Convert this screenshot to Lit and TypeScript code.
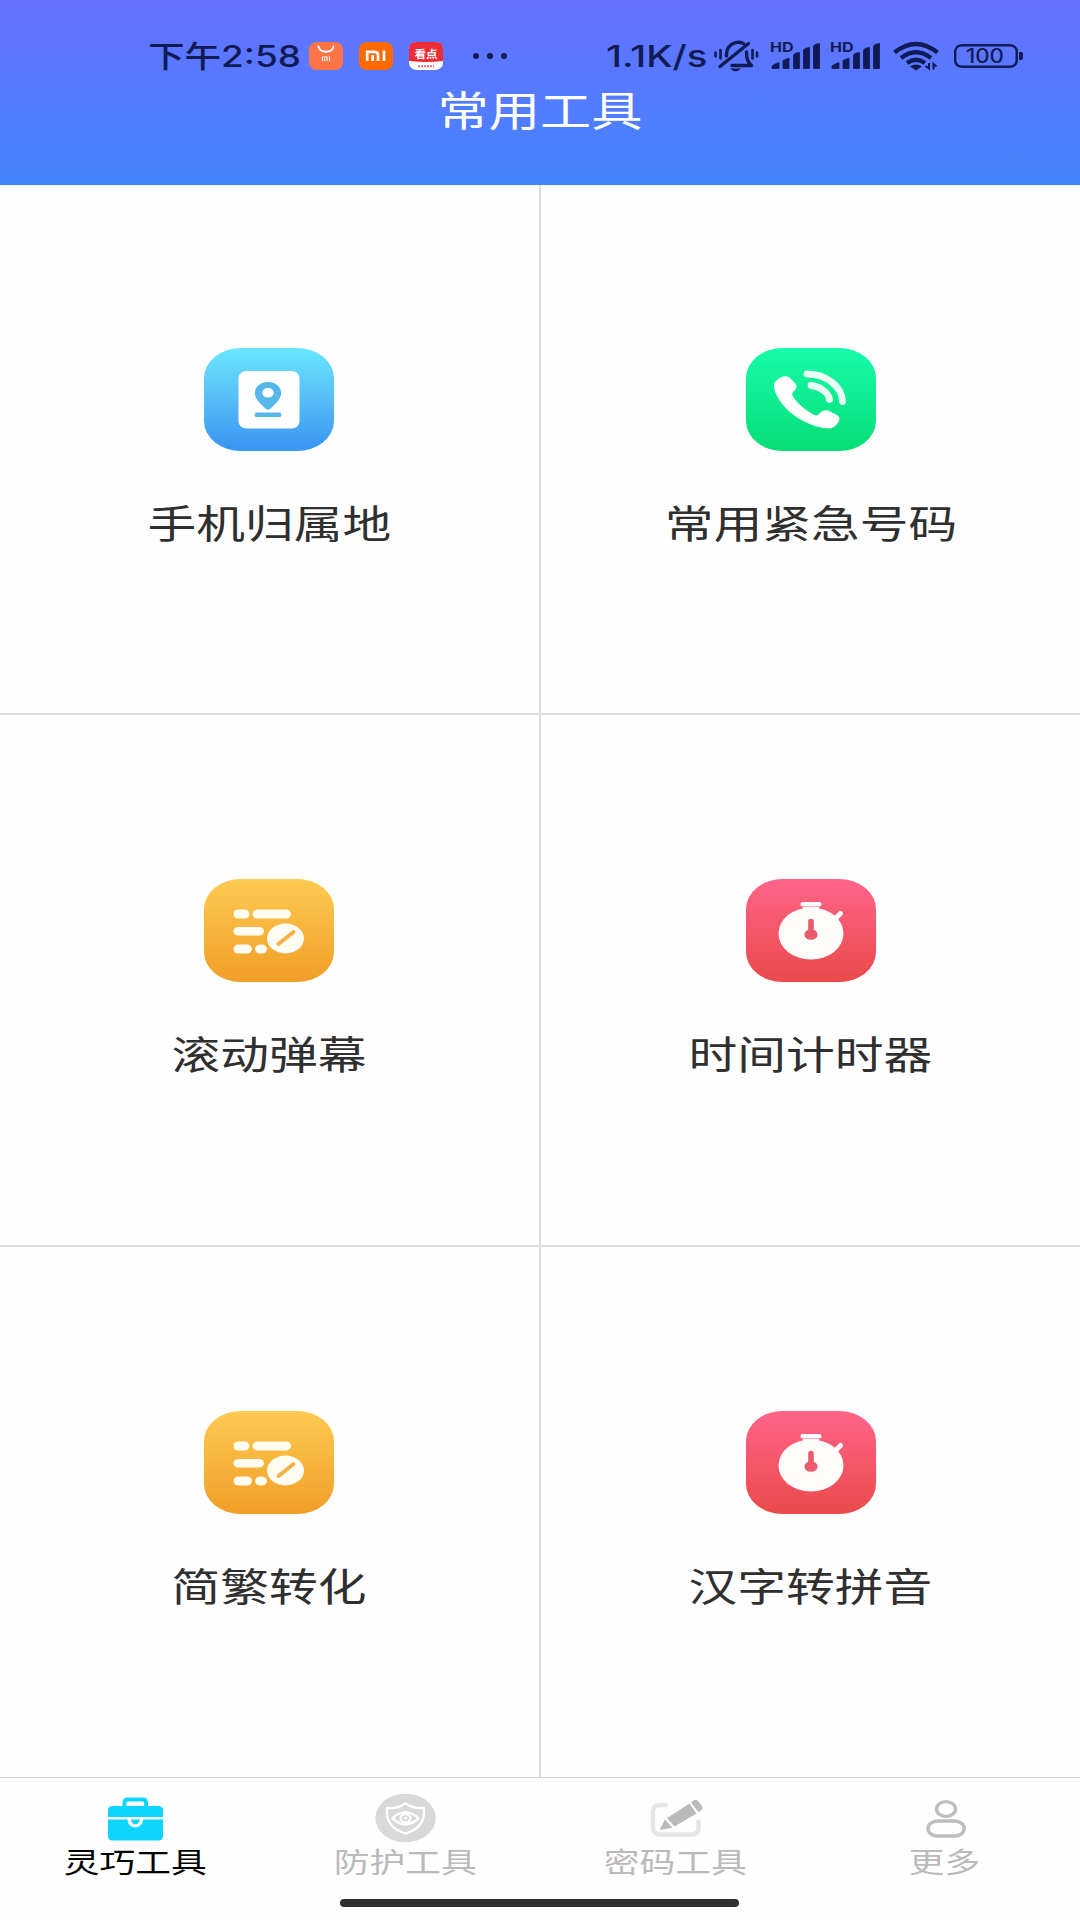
import { LitElement, html, css, svg } from "lit";
import { customElement } from "lit/decorators.js";

const tileIcons: Record<string, unknown> = {
  location: svg`
    <rect x="34.500" y="23" width="61" height="57.500" rx="8" ry="7" fill="#fff"/>
    <path fill-rule="evenodd" fill="#56b8ea" d="M64 34c-7.400 0-13.200 4.800-13.200 11.200C50.800 51.500 58 57.200 62 61q2 1.600 4 0c4-3.800 11.200-9.500 11.200-15.800C77.200 38.800 71.400 34 64 34zm0 6a5.800 4.800 0 1 1 0 9.600a5.800 4.800 0 1 1 0-9.600z"/>
    <rect x="50.800" y="64.600" width="26.400" height="4.400" rx="1.500" fill="#56b8ea"/>`,
  phone: svg`
    <path fill="#fff" d="M28 36Q28.500 33 34.500 29.600Q39.500 27 43.500 29.500L49.500 35.500Q52 39.500 48.500 42.500Q44.800 45.500 47 48.500C52 56.500 61 63 68.500 67Q71.500 68.300 73.500 65.500Q77.500 61 82 62.500L91 67Q94.500 69 93 73Q90 79 84.500 80.500C66 80.500 46 68 37.500 57.500C31.500 50 27.500 43 28 36Z"/>
    <path fill="none" stroke="#e9fff5" stroke-width="6.800" stroke-linecap="round" d="M61 26C80 26 96 38 96.500 53.500M65 37.500C74 38 83 45.500 83.500 51.500"/>`,
  list: svg`
    <g fill="#fffdf2"><rect x="29.500" y="30.500" width="16" height="9" rx="5" ry="4.500"/><rect x="48.500" y="30.500" width="38.500" height="9" rx="5" ry="4.500"/>
    <rect x="29.500" y="48" width="30.500" height="8.500" rx="5" ry="4.250"/>
    <rect x="29.500" y="65.500" width="18.500" height="9" rx="5" ry="4.500"/><rect x="51" y="65.500" width="12" height="9" rx="5.500" ry="4.500"/>
    <ellipse cx="81.500" cy="59.500" rx="18.500" ry="15"/></g>
    <path d="M74.500 65L89.500 53" stroke="#f5b046" stroke-width="3.800" stroke-linecap="round"/>`,
  timer: svg`
    <g fill="#fffdfb"><rect x="54.500" y="23" width="21" height="4.600" rx="2"/><path d="M57 28h16v4H57z"/>
    <ellipse cx="65" cy="54.500" rx="32.500" ry="26"/></g>
    <path d="M88 41L94.500 34.500" stroke="#fffdfb" stroke-width="5" stroke-linecap="round"/>
    <path d="M65 42.500V54" stroke="#e95b6d" stroke-width="5.600" stroke-linecap="round"/>
    <ellipse cx="65" cy="55.500" rx="6.600" ry="5.300" fill="#e95b6d"/>`,
};

const tiles = [
  { icon: "location", tone: "blue", label: "手机归属地" },
  { icon: "phone", tone: "green", label: "常用紧急号码" },
  { icon: "list", tone: "orange", label: "滚动弹幕" },
  { icon: "timer", tone: "red", label: "时间计时器" },
  { icon: "list", tone: "orange", label: "简繁转化" },
  { icon: "timer", tone: "red", label: "汉字转拼音" },
];

const tabs = [
  {
    label: "灵巧工具",
    active: true,
    icon: svg`<g transform="translate(0 1)">
      <path d="M17.500 15V8.500Q17.500 5.500 21 5.500H35.500Q39 5.500 39 8.500V15" fill="none" stroke="#0ed5ff" stroke-width="4"/>
      <path fill="#0ed5ff" d="M1 23V16Q1 12 6 12H51Q56 12 56 16V23ZM1 25.600H20.500C20.500 36 36 36 36 25.600H56V42Q56 46.500 51 46.500H6Q1 46.500 1 42Z"/>
      <path fill="#0ed5ff" d="M24 25.600H32.800C32.800 32 24 32 24 25.600Z"/></g>`,
  },
  {
    label: "防护工具",
    active: false,
    icon: svg`
      <ellipse cx="28.500" cy="25" rx="30.200" ry="24.300" fill="#d9d9d9"/>
      <g fill="none" stroke="#fff" stroke-width="2.300" stroke-linejoin="round"><path d="M28.500 10.500Q20 16 10 15C9 28 14 36 28.500 40.500C43 36 48 28 47 15Q37 16 28.500 10.500Z"/>
      <path d="M15.500 25.300Q28.500 13 41.500 25.300Q28.500 37.500 15.500 25.300Z"/><ellipse cx="28.500" cy="25.300" rx="5" ry="4.300"/></g>
      <circle cx="28.500" cy="25.300" r="1.500" fill="#fff"/>`,
  },
  {
    label: "密码工具",
    active: false,
    icon: svg`<g transform="translate(0 .5)">
      <path d="M18.500 11.500H14Q6 11.500 6 17.500V34Q6 41 14 41H44Q51.500 41 51.500 34V28.500" fill="none" stroke="#e5e5e5" stroke-width="4.500" stroke-linecap="round"/>
      <path fill="#bababa" d="M20 24.500L42.500 10L49.500 20L27.500 33ZM44 9L47 6.800Q49 5.500 51 7.500L55 12.800Q56.500 14.500 54.500 16.500L51.500 18.800ZM18 26L25.500 34.200L12.500 36.500Z"/></g>`,
  },
  {
    label: "更多",
    active: false,
    icon: svg`
      <g fill="none" stroke="#bdbdbd" stroke-width="3.400"><ellipse cx="29" cy="16" rx="9.500" ry="7.400"/><rect x="11" y="28" width="36.200" height="15" rx="9.500" ry="7.500"/></g>`,
  },
];

@customElement("status-bar")
export class StatusBar extends LitElement {
  static styles = css`
    :host { display: block; height: 74px; color: #101b55; }
    .bar { display: flex; align-items: flex-start; height: 74px; padding: 38px 50px 0 148px; box-sizing: border-box; }
    .box { flex: none; height: 36px; white-space: nowrap; }
    .time { width: 161px; }
    .speed { width: 106px; margin-left: auto; }
    .txt { display: inline-block; transform-origin: 0 50%; }
    .cjk { font: 500 30px/34px "Noto Sans CJK SC", sans-serif; transform: scaleX(1.22); margin-top: -1px; }
    .num { font: 500 30px/36px Inter, sans-serif; }
    .row { display: flex; }
    .zh { width: 73px; }
    .clock { transform: scaleX(1.23); }
    .rate { transform: scaleX(1.28); }
    .app { flex: none; width: 34px; height: 28px; margin-top: 4px; margin-right: 16px; }
    .dots { display: flex; gap: 8.200px; margin: 15px 0 0 14px; }
    .dot { width: 6px; height: 6px; border-radius: 50%; background: #101b55; }
    .sys { flex: none; width: 318px; height: 36px; }
    svg { display: block; }
  `;
  render() {
    const bars = (x: number) => svg`
      <text x=${x} y="14.800" font-size="13" font-weight="700" textLength="23.500" lengthAdjust="spacingAndGlyphs">HD</text>
      <path d="M${x + 2} 31v-2.500q4-3 7-3.500v6zM${x + 13} 31v-8l6-2.500v10.500zM${x + 23.500} 31V17.500q1-2 6-2.500V31zM${x + 33.500} 31V12.500q1-2 6-2.500V31zM${x + 43.500} 31V8.500q1-2 6-2.500V31z" stroke="#101b55" stroke-width=".8" stroke-linejoin="round"/>`;
    return html`<div class="bar">
      <div class="box time row">
        <div class="zh"><span class="txt cjk">下午</span></div>
        <span class="txt num clock">2:58</span>
      </div>
      <svg class="app" viewBox="0 0 34 28"><rect width="34" height="28" rx="8" ry="7" fill="#ff7547"/><path d="M9.500 4.500C11 11.500 23 11.500 24.500 4.500" fill="none" stroke="#fff" stroke-width="1.800" stroke-linecap="round"/><path d="M13.500 19V15H18V19M15.800 16.500V19M20.500 14.500V19" fill="none" stroke="#fff" stroke-width="1.100"/></svg>
      <svg class="app" viewBox="0 0 34 28"><rect width="34" height="28" rx="8" ry="7" fill="#ff6a00"/><path d="M8.200 19V9.800H15.500Q19 9.800 19 13V19M13.700 13V19M25 8.600V19" fill="none" stroke="#fff" stroke-width="2.700"/></svg>
      <svg class="app" viewBox="0 0 34 28"><rect width="34" height="28" rx="8" ry="7" fill="#fff"/><path d="M0 19V7Q0 0 8 0H26Q34 0 34 7V19Q17 21 0 19Z" fill="#ef2b36"/><text x="5.500" y="16.200" font-family="Noto Sans CJK SC" font-size="10.500" font-weight="700" fill="#fff" textLength="23" lengthAdjust="spacingAndGlyphs">看点</text><path d="M9 24.300H25" stroke="#ef6b70" stroke-width="2" stroke-dasharray="2 1"/></svg>
      <div class="dots"><span class="dot"></span><span class="dot"></span><span class="dot"></span></div>
      <div class="box speed"><span class="txt num rate">1.1K/s</span></div>
      <svg class="sys" viewBox="712 38 318 36" fill="#101b55" font-family="Inter, sans-serif">
        <g fill="none" stroke="#101b55" stroke-width="3.400" stroke-linecap="round" stroke-linejoin="round">
          <path d="M720 66.500L748.500 43.500M726.500 56V54C727 43.500 737 40.500 743.500 43.500M746.500 52C746.500 60 748 62 751.500 65.500H732"/>
          <path d="M715.500 52.500V56.500M720.500 50V58.500M752.500 50V58.500M757 52.500V56.500" stroke-width="2.600"/>
        </g>
        <path d="M730 68.500H741Q736 74 730 68.500Z"/>
        <g transform="translate(0 37.500)">${bars(770)}${bars(830)}</g>
        <g fill="none" stroke="#101b55" stroke-width="4.200"><path d="M894.500 52.500Q916 35.500 937.500 52.500M901 58Q916 46.500 931 58M907 63Q916 56.500 925 63"/></g>
        <path d="M910 66.500Q916 62.500 922 66.500L916 70.500Z"/>
        <path d="M929 63V68.500L925.500 66M933.500 69.500V64L936.500 66.500" fill="none" stroke="#101b55" stroke-width="2"/>
        <rect x="955.200" y="45.200" width="61.500" height="21.600" rx="7" ry="6" fill="none" stroke="#101b55" stroke-width="2.400"/>
        <path d="M1019 52H1021Q1023 52 1023 54V58Q1023 60 1021 60H1019Z"/>
        <text x="966" y="63" font-size="19.500" font-weight="500" textLength="38" lengthAdjust="spacingAndGlyphs">100</text>
      </svg>
    </div>`;
  }
}

@customElement("tool-tile")
export class ToolTile extends LitElement {
  static properties = { icon: {}, tone: {}, label: {} };
  declare icon: string;
  declare tone: string;
  declare label: string;
  static styles = css`
    :host { display: flex; flex-direction: column; align-items: center; box-sizing: border-box; padding-top: 163px; background: #fefefe; }
    :host(:nth-child(n + 3)) { padding-top: 164px; }
    .badge { width: 130px; height: 103px; border-radius: 37px / 30px; overflow: hidden; }
    :host(:nth-child(odd)) .badge { margin-right: 1px; }
    .blue { background: linear-gradient(#6ae6ff, #56bdf8 50%, #3694f2); }
    .green { background: linear-gradient(#16fbaa, #06dd76); }
    .orange { background: linear-gradient(#fdca52, #f19e27); }
    .red { background: linear-gradient(#ff6489, #e94a4a); }
    .label { margin-top: 42px; font: 400 39px/56px "Noto Sans CJK SC", sans-serif; color: #2f2f2f; white-space: nowrap; transform: scaleX(1.25); }
    :host(:nth-child(even)) .label { margin-left: 1px; }
    svg { display: block; }
  `;
  render() {
    return html`<div class="badge ${this.tone}"><svg width="130" height="103" viewBox="0 0 130 103">${tileIcons[this.icon]}</svg></div>
      <div class="label">${this.label}</div>`;
  }
}

@customElement("app-root")
export class AppRoot extends LitElement {
  static styles = css`
    :host { display: flex; flex-direction: column; width: 1080px; height: 1920px; background: #fefefe; overflow: hidden; }
    .header { flex: none; height: 185px; background: linear-gradient(#6670ff, #4385ff); }
    .title { margin-top: 6px; text-align: center; font: 400 41px/56px "Noto Sans CJK SC", sans-serif; color: #fff; transform: scaleX(1.25); }
    .grid { flex: none; display: grid; grid-template-columns: 539px 539px; grid-template-rows: 528px 530px 530px; gap: 2px; background: #dcdcdc; height: 1592px; }
    .tabs { flex: 1; display: grid; grid-template-columns: repeat(4, 1fr); align-content: start; border-top: 1px solid #d0d0d0; padding-top: 15px; }
    .tab { display: flex; flex-direction: column; align-items: center; color: #bababa; }
    .tab svg { display: block; overflow: visible; }
    .tab span { font: 400 28.600px/36px "Noto Sans CJK SC", sans-serif; transform: scaleX(1.25); white-space: nowrap; }
    .tab.active { color: #000; }
    .home { flex: none; align-self: center; width: 399px; height: 8px; border-radius: 4px; background: #303030; margin: 0 1px 13px 0; }
  `;
  render() {
    return html`
      <div class="header"><status-bar></status-bar><div class="title">常用工具</div></div>
      <div class="grid">${tiles.map((t) => html`<tool-tile .icon=${t.icon} .tone=${t.tone} .label=${t.label}></tool-tile>`)}</div>
      <div class="tabs">${tabs.map((t) => html`<div class="tab ${t.active ? "active" : ""}">
        <svg width="57" height="50" viewBox="0 0 57 50">${t.icon}</svg><span>${t.label}</span></div>`)}</div>
      <div class="home"></div>`;
  }
}
